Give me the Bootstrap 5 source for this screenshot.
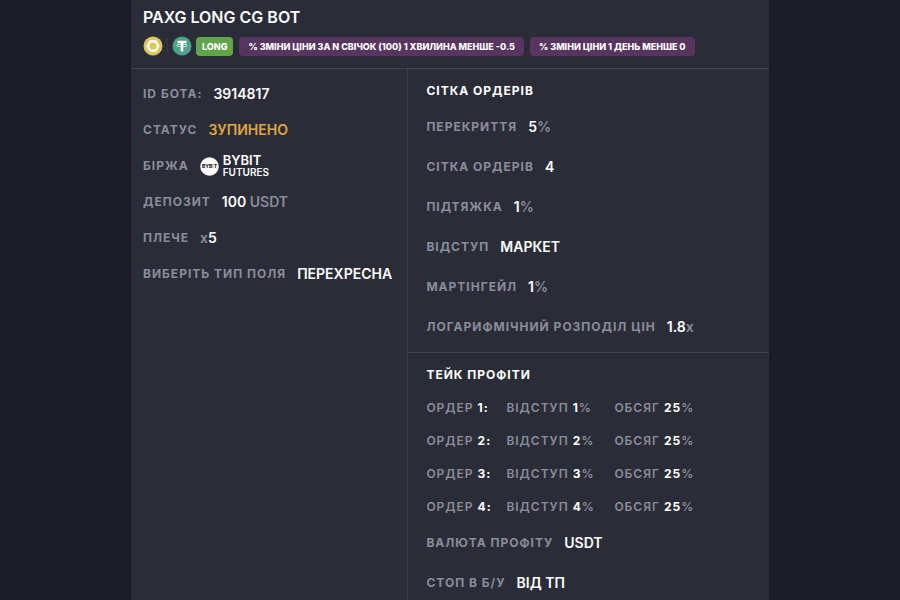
<!DOCTYPE html>
<html lang="uk">
<head>
<meta charset="utf-8">
<meta name="viewport" content="width=device-width, initial-scale=1">
<title>PAXG LONG CG BOT</title>
<link href="https://cdn.jsdelivr.net/npm/bootstrap@5.3.0/dist/css/bootstrap.min.css" rel="stylesheet">
<style>
  body { background: #1b1d29; color: #fff; font-family: Inter, "Liberation Sans", sans-serif; font-size: 14px; line-height: 20px; font-weight: 600; }
  .bot-panel { max-width: 638px; background: #2a2c38; }
  .bot-head { border-bottom: 1px solid #42444f; padding: 7px 12px 12px; }
  .bot-name { font-size: 16px; line-height: 20px; font-weight: 600; margin-bottom: 9px; }
  .coin { width: 20px; height: 20px; }
  .coin-split { width: 1px; height: 16px; background: #343642; }
  .tags { gap: 6px; }
  .tag { border-radius: 4px; padding: 0 9px; font-size: 9px; line-height: 19px; font-weight: 800; background: #57355f; }
  .tag-long { padding: 0 6px; background: #62a44c; }
  .bot-body { display: grid; grid-template-columns: 10fr 13fr; }
  .side-main { border-right: 1px solid #3a3c48; padding: 7px 12px; }
  .side-main .prop { min-height: 36px; }
  .block { padding: 12px 18px 5px; }
  .block + .block { border-top: 1px solid #42444f; }
  .block .prop { min-height: 40px; }
  .prop { gap: 11px; }
  .caption, .block-title, .orders { font-size: 12px; letter-spacing: 1px; }
  .caption, .unit { color: #8b8d9a; }
  .block-title { line-height: 20px; font-weight: 700; margin-bottom: 6px; }
  .status-stopped { color: #e0a743; }
  .orders td { padding: 0; height: 33px; vertical-align: middle; color: #8b8d9a; }
  .orders b { color: #fff; font-weight: 700; }
  .col-no { width: 80px; }
  .col-step { width: 108px; }
  .exchange-name { font-size: 13px; line-height: 12px; }
  .exchange-name small { font-size: 10px; line-height: 12px; }
</style>
</head>
<body>
<main class="bot-panel mx-auto min-vh-100 d-flex flex-column">
  <header class="bot-head">
    <h1 class="bot-name">PAXG LONG CG BOT</h1>
    <div class="d-flex align-items-center">
      <svg class="coin" viewBox="0 0 20 20" role="img" aria-label="PAXG">
        <circle cx="10" cy="10" r="9.5" fill="#dcc765"/>
        <path d="M7 4.6h6l3.2 5.4-3.2 5.4H7L3.800 10z" fill="#fffbe8" stroke="#fffbe8" stroke-width="1" stroke-linejoin="round"/>
        <circle cx="10" cy="10" r="3.600" fill="#dcc765"/>
      </svg>
      <span class="coin-split mx-1"></span>
      <svg class="coin me-1" viewBox="0 0 20 20" role="img" aria-label="USDT">
        <circle cx="10" cy="10" r="9.5" fill="#4da387"/>
        <path d="M5.500 4.700h9v2.500h-3.200v8.300H8.700V7.200H5.500z" fill="#fff"/>
        <ellipse cx="10" cy="9.500" rx="5.300" ry="1.300" fill="none" stroke="#fff" stroke-width=".7"/>
      </svg>
      <div class="tags d-flex">
        <span class="tag tag-long">LONG</span>
        <span class="tag">% ЗМІНИ ЦІНИ ЗА N СВІЧОК (100) 1 ХВИЛИНА МЕНШЕ -0.5</span>
        <span class="tag">% ЗМІНИ ЦІНИ 1 ДЕНЬ МЕНШЕ 0</span>
      </div>
    </div>
  </header>
  <div class="bot-body flex-grow-1">
    <dl class="side-main mb-0">
      <div class="prop d-flex align-items-center"><dt class="caption">ID БОТА:</dt><dd class="mb-0">3914817</dd></div>
      <div class="prop d-flex align-items-center"><dt class="caption">СТАТУС</dt><dd class="mb-0 status-stopped">ЗУПИНЕНО</dd></div>
      <div class="prop d-flex align-items-center"><dt class="caption">БІРЖА</dt>
        <dd class="mb-0 d-flex align-items-center gap-1">
          <svg width="19" height="19" viewBox="0 0 19 19" aria-hidden="true">
            <circle cx="9.500" cy="9.500" r="9.300" fill="#fff"/>
            <text x="9.500" y="11" text-anchor="middle" font-size="5" font-weight="800" fill="#22242e">BYB<tspan fill="#e0a743">I</tspan>T</text>
          </svg>
          <span class="exchange-name d-flex flex-column">BYBIT<small>FUTURES</small></span>
        </dd></div>
      <div class="prop d-flex align-items-center"><dt class="caption">ДЕПОЗИТ</dt><dd class="mb-0">100 <span class="unit">USDT</span></dd></div>
      <div class="prop d-flex align-items-center"><dt class="caption">ПЛЕЧЕ</dt><dd class="mb-0"><span class="unit">x</span>5</dd></div>
      <div class="prop d-flex align-items-center"><dt class="caption">ВИБЕРІТЬ ТИП ПОЛЯ</dt><dd class="mb-0">ПЕРЕХРЕСНА</dd></div>
    </dl>
    <div>
      <section class="block">
        <h2 class="block-title">СІТКА ОРДЕРІВ</h2>
        <dl class="mb-0">
          <div class="prop d-flex align-items-center"><dt class="caption">ПЕРЕКРИТТЯ</dt><dd class="mb-0">5<span class="unit">%</span></dd></div>
          <div class="prop d-flex align-items-center"><dt class="caption">СІТКА ОРДЕРІВ</dt><dd class="mb-0">4</dd></div>
          <div class="prop d-flex align-items-center"><dt class="caption">ПІДТЯЖКА</dt><dd class="mb-0">1<span class="unit">%</span></dd></div>
          <div class="prop d-flex align-items-center"><dt class="caption">ВІДСТУП</dt><dd class="mb-0">МАРКЕТ</dd></div>
          <div class="prop d-flex align-items-center"><dt class="caption">МАРТІНГЕЙЛ</dt><dd class="mb-0">1<span class="unit">%</span></dd></div>
          <div class="prop d-flex align-items-center"><dt class="caption">ЛОГАРИФМІЧНИЙ РОЗПОДІЛ ЦІН</dt><dd class="mb-0">1.8<span class="unit">x</span></dd></div>
        </dl>
      </section>
      <section class="block">
        <h2 class="block-title">ТЕЙК ПРОФІТИ</h2>
        <table class="orders">
          <tbody>
            <tr><td class="col-no">ОРДЕР <b>1:</b></td><td class="col-step">ВІДСТУП <b>1</b><span class="unit">%</span></td><td>ОБСЯГ <b>25</b><span class="unit">%</span></td></tr>
            <tr><td>ОРДЕР <b>2:</b></td><td>ВІДСТУП <b>2</b><span class="unit">%</span></td><td>ОБСЯГ <b>25</b><span class="unit">%</span></td></tr>
            <tr><td>ОРДЕР <b>3:</b></td><td>ВІДСТУП <b>3</b><span class="unit">%</span></td><td>ОБСЯГ <b>25</b><span class="unit">%</span></td></tr>
            <tr><td>ОРДЕР <b>4:</b></td><td>ВІДСТУП <b>4</b><span class="unit">%</span></td><td>ОБСЯГ <b>25</b><span class="unit">%</span></td></tr>
          </tbody>
        </table>
        <dl class="mb-0">
          <div class="prop d-flex align-items-center"><dt class="caption">ВАЛЮТА ПРОФІТУ</dt><dd class="mb-0">USDT</dd></div>
          <div class="prop d-flex align-items-center"><dt class="caption">СТОП В Б/У</dt><dd class="mb-0">ВІД ТП</dd></div>
        </dl>
      </section>
    </div>
  </div>
</main>
<script src="https://cdn.jsdelivr.net/npm/bootstrap@5.3.0/dist/js/bootstrap.bundle.min.js"></script>
</body>
</html>
